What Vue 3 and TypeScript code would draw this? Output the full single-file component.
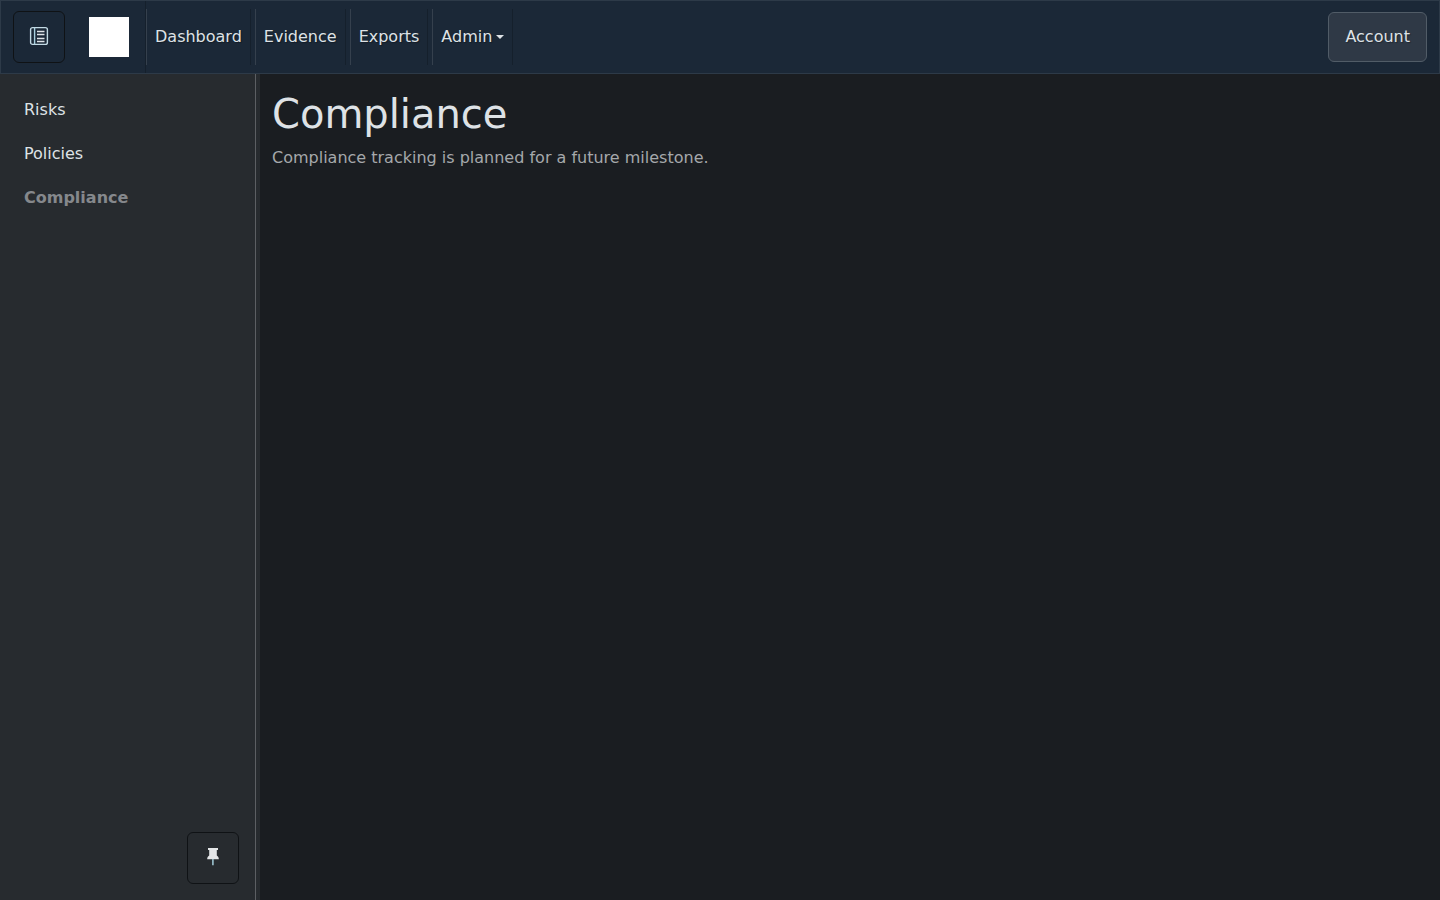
<script setup lang="ts">
interface NavItem {
  label: string
  menu: boolean
}

const navItems: NavItem[] = [
  { label: 'Dashboard', menu: false },
  { label: 'Evidence', menu: false },
  { label: 'Exports', menu: false },
  { label: 'Admin', menu: true },
]

const sections: string[] = ['Risks', 'Policies', 'Compliance']
const current = 'Compliance'
</script>

<template>
  <div class="app">
    <header class="navbar">
      <button class="icon-button" type="button" aria-label="Toggle sidebar">
        <svg width="20" height="20" viewBox="0 0 20 20" fill="none" aria-hidden="true">
          <rect x="1.6" y="1.6" width="16.8" height="16.8" rx="2" stroke="#c3dae4" stroke-width="1.4" />
          <path d="M5.6 1.6v16.8" stroke="#a9d0df" stroke-width="1.4" />
          <path d="M8 5.5h7.5M8 8.5h7.5M8 12.5h7.5M8 15.5h7.5" stroke="#dfe4e8" stroke-width="1.4" />
        </svg>
      </button>
      <a class="brand" href="#" aria-label="Home"><span class="logo"></span></a>
      <nav class="nav" aria-label="Main">
        <template v-for="item in navItems" :key="item.label">
          <button v-if="item.menu" class="nav-link" type="button" aria-haspopup="menu">
            {{ item.label }}<span class="caret"></span>
          </button>
          <a v-else class="nav-link" href="#">{{ item.label }}</a>
        </template>
      </nav>
      <button class="account" type="button">Account</button>
    </header>
    <div class="body">
      <aside class="sidebar">
        <nav class="sections" aria-label="Sections">
          <a
            v-for="section in sections"
            :key="section"
            class="section"
            :class="{ active: section === current }"
            href="#"
          >{{ section }}</a>
        </nav>
        <button class="icon-button pin" type="button" aria-label="Pin sidebar">
          <svg width="20" height="20" viewBox="0 0 20 20" aria-hidden="true">
            <path d="M5 1h10v2h-1.2v5.600c1.300.8 2 1.800 2 3.600H4.200c0-1.800.7-2.800 2-3.600V3H5z" fill="#e4e6e8" />
            <path d="M9.900 12v6.200" stroke="#9cc3d0" stroke-width="1.600" />
          </svg>
        </button>
      </aside>
      <div class="resizer"></div>
      <main class="content">
        <h1>Compliance</h1>
        <p>Compliance tracking is planned for a future milestone.</p>
      </main>
    </div>
  </div>
</template>

<style>
body {
  background: #1a1d21;
}
</style>

<style scoped>
.app {
  display: flex;
  flex-direction: column;
  min-height: 100vh;
  font-family: "DejaVu Sans", sans-serif;
  font-size: 16px;
  line-height: 24px;
  color: #dee2e6;
}
.app *,
.app {
  box-sizing: border-box;
}
button {
  font: inherit;
  color: inherit;
  margin: 0;
  cursor: pointer;
}
a {
  color: inherit;
  text-decoration: none;
}
.navbar {
  display: flex;
  align-items: center;
  height: 74px;
  padding: 0 12px;
  background: #1b2837;
  border: 1px solid #2d3a48;
}
.icon-button {
  display: flex;
  align-items: center;
  justify-content: center;
  width: 52px;
  height: 52px;
  padding: 0 0 2px;
  background: transparent;
  border: 1px solid #0f1215;
  border-radius: 6px;
}
.brand {
  display: flex;
  align-items: center;
  align-self: stretch;
  margin-left: 8px;
  padding: 0 16px;
  border-right: 1px solid #15202c;
}
.logo {
  width: 40px;
  height: 40px;
  background: #fff;
}
.nav {
  display: flex;
  gap: 4px;
}
.nav-link {
  display: flex;
  align-items: center;
  height: 56px;
  padding: 0 8px;
  background: transparent;
  border: 0 solid;
  border-left: 1px solid #35404d;
  border-right: 1px solid #15202c;
  text-shadow: 1px 1px 1px rgba(0, 0, 0, 0.3);
}
.caret {
  margin-left: 4px;
  border: 4px solid transparent;
  border-top-color: currentColor;
  border-bottom: 0;
}
.account {
  margin-left: auto;
  height: 50px;
  padding: 0 16px;
  background: #2f3946;
  border: 1px solid #515c67;
  border-radius: 6px;
  text-shadow: 1px 1px 1px rgba(0, 0, 0, 0.3);
}
.body {
  display: flex;
  flex: 1;
}
.sidebar {
  display: flex;
  flex-direction: column;
  justify-content: space-between;
  width: 256px;
  padding: 14px 16px 16px 0;
  background: #272b2f;
  border-right: 1px solid #5c5f63;
}
.sections {
  display: flex;
  flex-direction: column;
}
.section {
  padding: 10px 24px;
}
.active {
  font-weight: 700;
  color: #85888c;
}
.pin {
  align-self: flex-end;
}
.resizer {
  width: 4px;
  background: #272b2f;
}
.content {
  flex: 1;
  padding: 16px 12px;
}
h1 {
  margin: 0 0 8px;
  font-size: 40px;
  line-height: 48px;
  font-weight: 400;
}
p {
  margin: 0;
  color: #a5a8ab;
}
</style>
